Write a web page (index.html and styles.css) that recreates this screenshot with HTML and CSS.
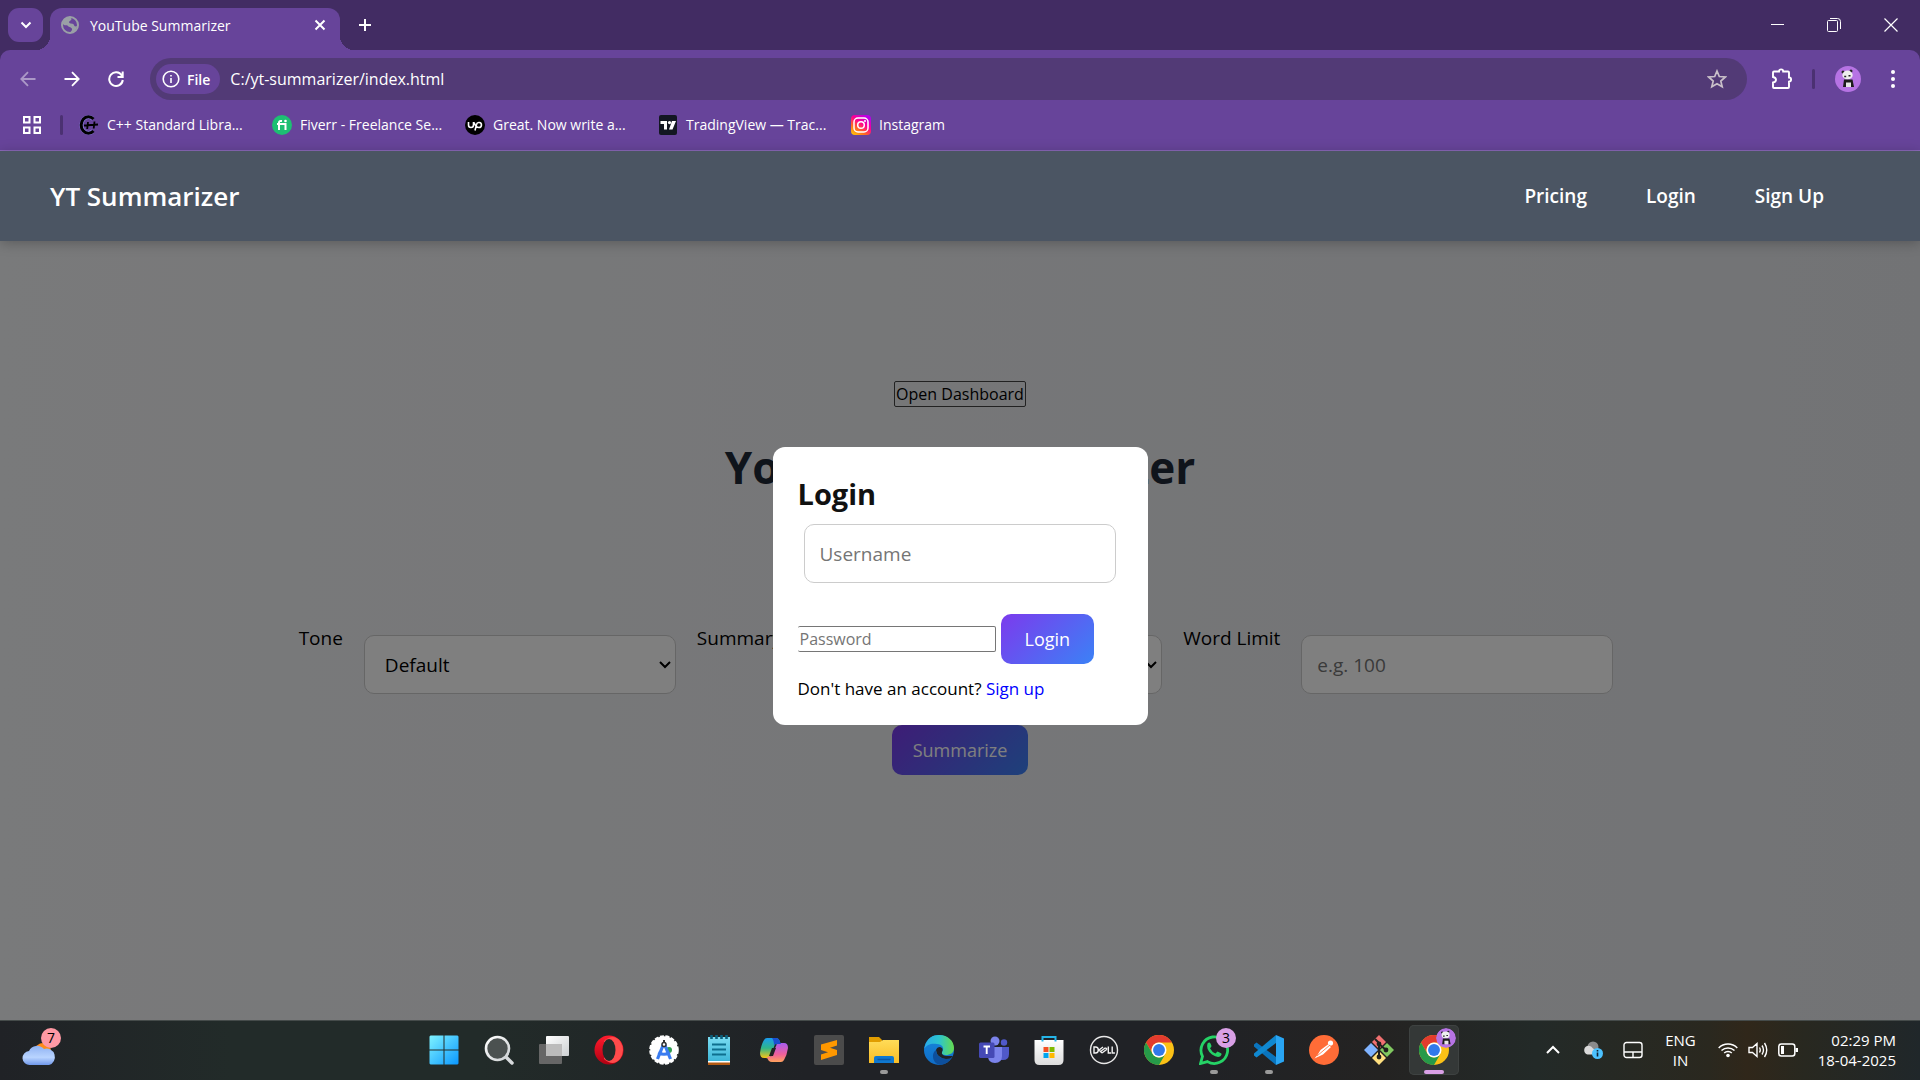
FILE: index.html
```html
<!DOCTYPE html>
<html lang="en">
<head>
<meta charset="utf-8">
<meta name="viewport" content="width=device-width, initial-scale=1">
<title>YouTube Summarizer</title>
<link rel="stylesheet" href="styles.css">
</head>
<body>
<svg class="defs" aria-hidden="true">
  <defs>
    <linearGradient id="gWin" x1="0" y1="0" x2="1" y2="1"><stop offset="0" stop-color="#7ff3ff"/><stop offset="1" stop-color="#0a97ff"/></linearGradient>
    <linearGradient id="gGlass" x1="0" y1="0" x2="1" y2="1"><stop offset="0" stop-color="#fff"/><stop offset="1" stop-color="#ccd0d2"/></linearGradient>
    <linearGradient id="gOpera" x1="0" y1="0" x2="0" y2="1"><stop offset="0" stop-color="#ff1b2d"/><stop offset="1" stop-color="#b00012"/></linearGradient>
    <linearGradient id="gNote" x1="0" y1="0" x2="0" y2="1"><stop offset="0" stop-color="#7adcf2"/><stop offset="1" stop-color="#3db6d8"/></linearGradient>
    <linearGradient id="gCopA" x1="0" y1="0" x2="0" y2="1"><stop offset="0" stop-color="#1a9cf0"/><stop offset=".5" stop-color="#2fb68a"/><stop offset="1" stop-color="#fbc513"/></linearGradient>
    <linearGradient id="gCopB" x1="0" y1="0" x2="0" y2="1"><stop offset="0" stop-color="#a85cf0"/><stop offset=".6" stop-color="#f0609a"/><stop offset="1" stop-color="#ffa35c"/></linearGradient>
    <linearGradient id="gFold" x1="0" y1="0" x2="0" y2="1"><stop offset="0" stop-color="#ffdc58"/><stop offset="1" stop-color="#f9bd26"/></linearGradient>
    <linearGradient id="gEdge" x1="0" y1="0" x2="1" y2="0"><stop offset="0" stop-color="#2aa9e8"/><stop offset=".5" stop-color="#2cc4cf"/><stop offset="1" stop-color="#66dc4c"/></linearGradient>
    <linearGradient id="gEdgeB" x1="0" y1="0" x2="0" y2="1"><stop offset="0" stop-color="#1787dd"/><stop offset="1" stop-color="#0f6cc6"/></linearGradient>
    <linearGradient id="gStore" x1="0" y1="0" x2="0" y2="1"><stop offset="0" stop-color="#fff"/><stop offset="1" stop-color="#dcdcdc"/></linearGradient>
    <linearGradient id="gCloud" x1="0" y1="0" x2="0" y2="1"><stop offset="0" stop-color="#8fb2f2"/><stop offset=".6" stop-color="#b9d4ff"/><stop offset="1" stop-color="#6f97ea"/></linearGradient>
    <linearGradient id="gInsta" x1="0" y1="1" x2=".7" y2="0"><stop offset="0" stop-color="#ffd600"/><stop offset=".35" stop-color="#ff6a1f"/><stop offset=".65" stop-color="#ff0090"/><stop offset="1" stop-color="#b800e8"/></linearGradient>
    <symbol id="chrome" viewBox="0 0 48 48">
      <circle cx="24" cy="24" r="24" fill="#fbc116"/>
      <path d="M3.2 12A24 24 0 0 1 44.8 12H24A12 12 0 0 0 13.6 30Z" fill="#e33b2e"/>
      <path d="M3.2 12A24 24 0 0 0 24 48L34.4 30A12 12 0 0 1 13.6 30Z" fill="#269a49"/>
      <circle cx="24" cy="24" r="12" fill="#fff"/><circle cx="24" cy="24" r="9.5" fill="#3279ea"/>
    </symbol>
    <symbol id="panda" viewBox="0 0 26 26">
      <circle cx="13" cy="13" r="13" fill="#b673e4"/>
      <circle cx="8" cy="6" r="1.500" fill="#222"/><circle cx="16" cy="5" r="1.500" fill="#222"/>
      <ellipse cx="12.500" cy="9" rx="5.200" ry="4.400" fill="#eee"/>
      <path d="M9.200 10.500h2M13.500 9.800h2" stroke="#222" stroke-width="1.500"/>
      <path d="M9 13.500h8.500l1.500 7.500h-3v-4h-4.500v4H8z" fill="#1c1c1c"/><path d="M11 16.500h5V21h-5z" fill="#e6e6e6"/>
    </symbol>
  </defs>
</svg>

<header class="browser">
  <div class="tabstrip">
    <button class="tab-search" aria-label="Search tabs"><svg width="12" height="12" viewBox="0 0 12 12"><path d="M1.500 3.500 6 8l4.500-4.500" fill="none" stroke="#fff" stroke-width="2"/></svg></button>
    <div class="tab">
      <svg width="18" height="18" viewBox="0 0 18 18"><circle cx="9" cy="9" r="8" fill="#67449a" stroke="#9aa0a6" stroke-width="2"/><path d="M8 1.500c3 .5 3 2 1.500 3S7.500 6 8.500 7s4 0 4.500 2 2.500 1.500 3.500 1L14 15l-4 2c-1-2 1.500-2 1-4s-3-1.500-4-3-2 0-4-1L1 7l3-5z" fill="#9aa0a6"/></svg>
      <span class="tab-title">YouTube Summarizer</span>
      <button class="icon-btn" aria-label="Close tab"><svg width="12" height="12" viewBox="0 0 12 12"><path d="m1.500 1.500 9 9m0-9-9 9" stroke="#fff" stroke-width="2"/></svg></button>
    </div>
    <button class="icon-btn new-tab" aria-label="New tab"><svg width="14" height="14" viewBox="0 0 14 14"><path d="M7 1v12M1 7h12" stroke="#fff" stroke-width="2"/></svg></button>
    <div class="window-controls">
      <button class="icon-btn" aria-label="Minimize"><svg width="14" height="14" viewBox="0 0 14 14"><path d="M1 6.500h13" stroke="#fff"/></svg></button>
      <button class="icon-btn" aria-label="Restore"><svg width="14" height="14" viewBox="0 0 14 14"><path d="M.5 3.500q0-1 1-1h8q1 0 1 1v9q0 1-1 1h-8q-1 0-1-1zM3 .5h7.500q3 0 3 3V11" fill="none" stroke="#fff"/></svg></button>
      <button class="icon-btn" aria-label="Close"><svg width="14" height="14" viewBox="0 0 14 14"><path d="m.5.500 13 13m0-13-13 13" stroke="#fff" stroke-width="1.200"/></svg></button>
    </div>
  </div>
  <div class="toolbar">
    <div class="nav-buttons">
      <button class="icon-btn faded" aria-label="Back"><svg width="16" height="16" viewBox="0 0 16 16"><path d="M15.500 8h-14M8 1.200 1.300 8 8 14.800" fill="none" stroke="#fff" stroke-width="1.800"/></svg></button>
      <button class="icon-btn" aria-label="Forward"><svg width="16" height="16" viewBox="0 0 16 16"><path d="M.5 8h14M8 1.200 14.700 8 8 14.800" fill="none" stroke="#fff" stroke-width="1.800"/></svg></button>
      <button class="icon-btn" aria-label="Reload"><svg width="16" height="16" viewBox="0 0 16 16"><path d="M13.800 4.500A6.800 6.800 0 1 0 14.800 9M14.700.500V6H9.500" fill="none" stroke="#fff" stroke-width="2"/></svg></button>
    </div>
    <div class="omnibox">
      <button class="file-chip"><svg width="18" height="18" viewBox="0 0 18 18"><circle cx="9" cy="9" r="7.800" fill="none" stroke="#fff" stroke-width="1.600"/><path d="M9 8v5M9 5v1.600" stroke="#fff" stroke-width="1.600"/></svg>File</button>
      <input class="url" type="text" aria-label="Address" value="C:/yt-summarizer/index.html">
      <button class="icon-btn" aria-label="Bookmark this page"><svg width="20" height="20" viewBox="0 0 20 20"><path d="m10 2 2.300 5.500 6 .5-4.500 4 1.400 5.800L10 14.700l-5.200 3.100L6.200 12 1.700 8l6-.5z" fill="none" stroke="#c9c0c9" stroke-width="1.700"/></svg></button>
    </div>
    <button class="icon-btn ext" aria-label="Extensions"><svg width="22" height="22" viewBox="0 0 22 22"><path d="M2 4.500q0-1 1-1h5a2 2 0 0 1 4.200 0H17q1 0 1 1v5a2 2 0 0 1 0 4.200V19q0 1-1 1H3q-1 0-1-1v-4.500q3-.5 3-2.700T2 9z" fill="none" stroke="#fff" stroke-width="1.900"/></svg></button>
    <span class="divider"></span>
    <button class="icon-btn profile" aria-label="Profile"><svg width="26" height="26"><use href="#panda"/></svg></button>
    <button class="icon-btn menu" aria-label="Menu"><svg width="6" height="20" viewBox="0 0 6 20"><g fill="#fff"><circle cx="3" cy="3" r="2"/><circle cx="3" cy="10" r="2"/><circle cx="3" cy="17" r="2"/></g></svg></button>
  </div>
  <nav class="bookmarks" aria-label="Bookmarks">
    <button class="icon-btn" aria-label="Apps"><svg width="18" height="18" viewBox="0 0 18 18"><path d="M1 1h5.500v5.500H1zM11.500 1H17v5.500h-5.500zM1 11.500h5.500V17H1zM11.500 11.500H17V17h-5.500z" fill="none" stroke="#fff" stroke-width="2"/></svg></button>
    <span class="divider"></span>
    <a class="bookmark" href="#"><svg width="20" height="20" viewBox="0 0 20 20"><path d="M14 4A7 8 0 1 0 14 16" fill="none" stroke="#8a7ee0" stroke-width="4"/><path d="M14.500 4A7.300 8.300 0 1 0 14.500 16" fill="none" stroke="#000" stroke-width="3"/><path d="M5 10.500 19 9.500M9 7l-.8 7M15.500 6.500l-.8 7" stroke="#000" stroke-width="1.800"/></svg><span>C++ Standard Libra...</span></a>
    <a class="bookmark" href="#"><svg width="20" height="20" viewBox="0 0 20 20"><circle cx="10" cy="10" r="10" fill="#1dbf73"/><path d="M7 15V7.500Q7 5.500 10 6M5 9h8.500v6" fill="none" stroke="#fff" stroke-width="2"/><circle cx="13.500" cy="6" r="1.300" fill="#fff"/></svg><span>Fiverr - Freelance Se...</span></a>
    <a class="bookmark" href="#"><svg width="20" height="20" viewBox="0 0 20 20"><circle cx="10" cy="10" r="10" fill="#000"/><path d="M3.500 7v3a2.500 2.500 0 0 0 5 0V7M10 15.500l1.500-6a2.500 2.500 0 1 1 2.500 3q-3 0-5-5" fill="none" stroke="#fff" stroke-width="1.600"/></svg><span>Great. Now write a...</span></a>
    <a class="bookmark" href="#"><svg width="20" height="20" viewBox="0 0 20 20"><rect x="1" width="18" height="20" rx="2" fill="#131722"/><path d="M2.500 6H9v8.500H6V9H2.500zM14 6h4l-3.500 8.500h-3.500z" fill="#fff"/><circle cx="11.500" cy="7.600" r="1.600" fill="#fff"/></svg><span>TradingView — Trac...</span></a>
    <a class="bookmark" href="#"><svg width="20" height="20" viewBox="0 0 20 20"><rect width="20" height="20" rx="4" fill="url(#gInsta)"/><rect x="3" y="3" width="14" height="14" rx="4" fill="none" stroke="#fff" stroke-width="1.500"/><circle cx="10" cy="10" r="3.300" fill="none" stroke="#fff" stroke-width="1.500"/><circle cx="14" cy="6" r="1" fill="#fff"/></svg><span>Instagram</span></a>
  </nav>
</header>

<div class="page">
  <header class="site-header">
    <span class="brand">YT Summarizer</span>
    <nav class="site-nav" aria-label="Site">
      <a href="#">Pricing</a>
      <a href="#">Login</a>
      <a href="#">Sign Up</a>
    </nav>
  </header>
  <main class="content">
    <button class="plain-btn">Open Dashboard</button>
    <h1>YouTube Summarizer</h1>
    <div class="options">
      <label for="tone">Tone</label>
      <select class="field" id="tone"><option>Default</option></select>
      <label for="type">Summary Type</label>
      <select class="field" id="type"><option>Default</option></select>
      <label for="limit">Word Limit</label>
      <input class="field" id="limit" type="text" placeholder="e.g. 100">
    </div>
    <button class="primary">Summarize</button>
  </main>
  <div class="overlay">
    <form class="modal" role="dialog" aria-labelledby="login-title">
      <h2 id="login-title">Login</h2>
      <input class="field" type="text" placeholder="Username" aria-label="Username">
      <div class="login-row">
        <input class="password" type="password" placeholder="Password" aria-label="Password">
        <button class="primary" type="button">Login</button>
      </div>
      <p>Don't have an account? <a href="#">Sign up</a></p>
    </form>
  </div>
</div>

<footer class="taskbar">
  <button class="weather" aria-label="Widgets">
    <svg width="36" height="36" viewBox="0 0 36 36"><circle cx="22" cy="19" r="8" fill="#ff8a1a"/><path d="M8 33a7 7 0 0 1-1-14 9 9 0 0 1 15-2 8 8 0 0 1 5 16z" fill="url(#gCloud)" transform="translate(1 0)"/></svg>
    <span class="badge badge-pink">7</span>
  </button>
  <div class="apps">
    <button class="app" aria-label="Start"><svg width="30" height="30" viewBox="0 0 30 30"><path d="M1.500.500h13v14H.5v-13zM15.500.500h13l1 1v13h-14zM.5 15.500h14v14h-13l-1-1zM15.500 15.500h14v13l-1 1h-13z" fill="url(#gWin)"/></svg></button>
    <button class="app" aria-label="Search"><svg width="30" height="30" viewBox="0 0 30 30"><path d="m21 21 7 7" stroke="#d7dadc" stroke-width="3.500" stroke-linecap="round"/><circle cx="13.500" cy="13.500" r="11.500" fill="#4b5150" stroke="url(#gGlass)" stroke-width="2.600"/></svg></button>
    <button class="app" aria-label="Task view"><svg width="30" height="30" viewBox="0 0 30 30"><rect y="9" width="23" height="20" rx="1" fill="#666"/><rect x="7" y="1" width="23" height="20" rx="1" fill="url(#gGlass)"/><path d="M7 9h16v12H7z" fill="#bbb"/></svg></button>
    <button class="app" aria-label="Opera"><svg width="30" height="30" viewBox="0 0 30 30"><circle cx="15" cy="15" r="14.500" fill="url(#gOpera)"/><path d="M10 6Q19-2 26 6q6 9 0 18-7 8-16 0z" fill="#ff4b4b"/><ellipse cx="15" cy="15" rx="6.500" ry="11" fill="#222b2a"/></svg></button>
    <button class="app" aria-label="Android Studio"><svg width="30" height="30" viewBox="0 0 30 30"><circle cx="15" cy="15" r="13.800" fill="#fff" stroke="#fff" stroke-width="2" stroke-dasharray="4 1.500"/><circle cx="20" cy="15" r="3" fill="#2f9e50"/><path d="M15 8 8.500 24M15 8l6.500 16M9 18q6 2.500 12 0" fill="none" stroke="#3a7cf0" stroke-width="3.200"/><circle cx="15" cy="9.500" r="2" fill="#fff" stroke="#333" stroke-width="1.500"/><path d="M15 5v3" stroke="#333" stroke-width="2"/></svg></button>
    <button class="app" aria-label="Notepad"><svg width="30" height="30" viewBox="0 0 30 30"><path d="M4 26h22v4H4z" fill="#b35a12"/><path d="M4 25h22v2.500H4z" fill="#fff"/><path d="M4 2h22v24H4z" fill="url(#gNote)"/><path d="M8 9.500h14M8 14.500h14M8 19.500h14" stroke="#0e6f8e" stroke-width="2"/><path d="M7.500 0v4M12.500 0v4M17.500 0v4M22.500 0v4" stroke="#0b5f7c" stroke-width="2.600"/></svg></button>
    <button class="app" aria-label="Copilot"><svg width="30" height="30" viewBox="0 0 30 30"><path d="M8 3h9q3 0 4 4l1 4-6-2-4 11q-1 4-5 3H5q-4 0-4-5 1-8 4-13 1-2 3-2z" fill="url(#gCopA)"/><path d="M22 27h-9q-4 0-5-5l5-1 4-10q1-3 5-3h3q4 0 4 5-1 7-4 12-1 2-3 2z" fill="url(#gCopB)"/><path d="M17 3q3 0 4 4l1 2h-5q-2 0-2 2 0-6-2-8z" fill="#1a4fd0"/><path d="M13 13h4l-3 8h-4z" fill="#212225"/></svg></button>
    <button class="app" aria-label="Sublime Text"><svg width="30" height="30" viewBox="0 0 30 30"><rect width="30" height="30" rx="2" fill="#4b4b4b"/><path d="m7 9.500 16-4.500v5.500l-7 2.200 7 2.300v5L7 25v-5.500l7-2.200-7-2.300z" fill="#ff9800"/></svg></button>
    <button class="app" aria-label="File Explorer"><svg width="30" height="30" viewBox="0 0 30 30"><path d="M0 2h10l3 3v5H0z" fill="#e19d00"/><path d="M0 7h11l3-2h16v23H0z" fill="url(#gFold)"/><path d="M5 28v-5q0-2 2-2h16q2 0 2 2v5z" fill="#0f78d0"/><path d="M8.500 24.500h13" stroke="#0b57a4" stroke-width="1.500"/></svg><i class="running"></i></button>
    <button class="app" aria-label="Edge"><svg width="30" height="30" viewBox="0 0 30 30"><circle cx="15" cy="15" r="15" fill="url(#gEdgeB)"/><path d="M12 15c0 7 8 11 16 7a15 15 0 0 1-11 8C8 29 7 18 12 15z" fill="#0d4f9c"/><path d="M1 11C3 3 9 0 15 0c9 0 15 6 15 13 0 5-4 7-8 7-3 0-5-1-4-3 3-4 0-8-5-8-5-1-10 0-13 5z" fill="url(#gEdge)"/><path d="M12 15q1-3 4-3 4 1 2 5-1 3 4 4h7q-2 3-7 3-9-1-10-9z" fill="#212225"/></svg></button>
    <button class="app" aria-label="Teams"><svg width="30" height="30" viewBox="0 0 30 30"><circle cx="16" cy="6" r="4.500" fill="#7b83eb"/><circle cx="25" cy="7.500" r="3.200" fill="#5059c9"/><path d="M18 12h12v7q0 6-6 6h-4z" fill="#5059c9"/><path d="M9 12h14v9q0 7-7 7t-7-7z" fill="#7b83eb"/><rect y="7.500" width="15.500" height="15.500" rx="1.500" fill="#4549b5"/><path d="M4.500 11.500h6.500M7.700 11.500V19" stroke="#fff" stroke-width="1.900"/></svg></button>
    <button class="app" aria-label="Microsoft Store"><svg width="30" height="30" viewBox="0 0 30 30"><path d="M.5 5h29v20q0 5-5 5h-19q-5 0-5-5z" fill="url(#gStore)"/><path d="M8.500 6.500V2h13v4.500" fill="none" stroke="#25b5e8" stroke-width="2"/><path d="M9.500 12h5v5h-5z" fill="#f25022"/><path d="M15.500 12h5v5h-5z" fill="#7fba00"/><path d="M9.500 18h5v5h-5z" fill="#00a4ef"/><path d="M15.500 18h5v5h-5z" fill="#ffb900"/></svg></button>
    <button class="app" aria-label="Dell"><svg width="30" height="30" viewBox="0 0 30 30"><circle cx="15" cy="15" r="13.500" fill="none" stroke="#e8e8e8" stroke-width="1.400"/><path d="M5 12h1.500q2.800 0 2.800 3t-2.800 3H5zM19.300 11.500V18h2.700M23.200 11.500V18h2.700M10 15l4-3M11.500 16.500l5-3.700M13 18l5-3.700M10 15l3 3M16.500 12.800l1.500 1.500" fill="none" stroke="#f2f2f2" stroke-width="1.400"/></svg></button>
    <button class="app" aria-label="Chrome"><svg width="30" height="30"><use href="#chrome"/></svg></button>
    <button class="app" aria-label="WhatsApp"><svg width="30" height="30" viewBox="0 0 30 30"><path d="m1.500 28.500 2-7.200A13.300 13.300 0 1 1 8.500 26.600z" fill="none" stroke="#25d366" stroke-width="2.800"/><path d="M8.500 8.500q2-2 3 0l1 2.500q0 1-1.500 2.200 2 4 5.500 5.300l2-2 3.500 1.700q1.500 1-1 3.300-3 1.500-8-2-6.500-5-4.500-11z" fill="#25d366"/></svg><span class="badge badge-lilac">3</span><i class="running"></i></button>
    <button class="app" aria-label="VS Code"><svg width="30" height="30" viewBox="0 0 30 30"><path d="m22 0 8 3.500v23L22 30z" fill="#29a5f3"/><path d="m0 9.500 2.500-2L22 22v8L0 11.500z" fill="#0a74bd"/><path d="m0 20.500 2.500 2L22 8V0L0 18.500z" fill="#1088d0"/></svg><i class="running"></i></button>
    <button class="app" aria-label="Postman"><svg width="30" height="30" viewBox="0 0 30 30"><circle cx="15" cy="15" r="15" fill="#ff6c37"/><circle cx="21.500" cy="8" r="2.600" fill="#fff"/><path d="m19 9.500 3 2.500-8 7.500-8.500 4 3-3.500 3-5z" fill="#fff"/><path d="m8 21 13-11" stroke="#ff6c37" stroke-width=".8"/></svg></button>
    <button class="app" aria-label="Git"><svg width="30" height="30" viewBox="0 0 30 30"><path d="m15 0 7 7-7 7-7-7z" fill="#f07070"/><path d="m7 8 7 7-7 7-7-7z" fill="#80b3ff"/><path d="m23 8 7 7-7 7-7-7z" fill="#80c860"/><path d="m15 16 7 7-7 7-7-7z" fill="#ffe080"/><path d="m11 4 4 4v14M15 9l7 6" fill="none" stroke="#20201f" stroke-width="2"/><circle cx="15" cy="9" r="2.400" fill="#20201f"/><circle cx="22" cy="15" r="2.400" fill="#20201f"/><circle cx="15" cy="22" r="2.400" fill="#20201f"/></svg></button>
    <button class="app active" aria-label="Chrome profile"><svg width="30" height="30"><use href="#chrome"/></svg><svg class="badge" width="20" height="20"><use href="#panda"/></svg><i class="running"></i></button>
  </div>
  <div class="tray">
    <button class="icon-btn chevron" aria-label="Show hidden icons"><svg width="14" height="10" viewBox="0 0 14 10"><path d="m1 8 6-6 6 6" fill="none" stroke="#fff" stroke-width="2"/></svg></button>
    <button class="icon-btn" aria-label="OneDrive"><svg width="20" height="20" viewBox="0 0 20 20"><circle cx="10" cy="7" r="5.500" fill="#8b8b8b"/><path d="M4.500 14.500a4.500 4.500 0 0 1-.5-8.500q4-1 6 2.500l6 3.500v2.500z" fill="#dadada"/><circle cx="14.500" cy="13.500" r="5.500" fill="#4cc2ff"/><path d="M14.500 12.500v4M14.500 10v1.500" stroke="#123" stroke-width="1.600"/></svg></button>
    <button class="icon-btn" aria-label="Touchpad"><svg width="20" height="18" viewBox="0 0 20 18"><rect x="1" y="1.500" width="18" height="15" rx="2.500" fill="none" stroke="#fff" stroke-width="1.400"/><path d="M1 11h18M10 11v5.500" stroke="#fff" stroke-width="1.400"/></svg></button>
    <span class="lang">ENG<br>IN</span>
    <button class="status" aria-label="Network, volume and battery">
      <svg width="20" height="20" viewBox="0 0 20 20"><g fill="none" stroke="#fff" stroke-width="1.500"><path d="M.7 8a13 13 0 0 1 18.600 0M3.500 10.500a9.500 9.500 0 0 1 13 0M6.200 13a5.500 5.500 0 0 1 7.600 0"/></g><circle cx="10" cy="15.500" r="1.800" fill="#fff"/></svg>
      <svg width="20" height="20" viewBox="0 0 20 20"><path d="M1 7.500h3.500L9 3.500v13l-4.500-4H1zM11.500 7.500q1.500 2.500 0 5M14 5.500q3 4.500 0 9M16.500 3q4.500 7 0 14" fill="none" stroke="#fff" stroke-width="1.400"/></svg>
      <svg width="20" height="20" viewBox="0 0 20 20"><rect x=".8" y="4" width="16" height="12" rx="2.500" fill="none" stroke="#fff" stroke-width="1.500"/><path d="M3 6h3v8H3zM17.500 8H20v4h-2.500z" fill="#fff"/></svg>
    </button>
    <time class="clock" datetime="2025-04-18T14:29">02:29 PM<br>18-04-2025</time>
  </div>
</footer>
</body>
</html>
```
FILE: styles.css
```css
* { box-sizing: border-box; }

body {
  margin: 0;
  min-height: 100vh;
  display: flex;
  flex-direction: column;
  font-family: "Open Sans", "Noto Sans", sans-serif;
  font-size: 16px;
  color: #000;
}

button, input, select { font: inherit; margin: 0; }
button { cursor: pointer; }
svg { display: block; flex: none; }
.defs { position: absolute; width: 0; height: 0; }

.icon-btn {
  display: flex;
  align-items: center;
  justify-content: center;
  padding: 0;
  border: 0;
  background: none;
}

/* Browser frame */
.browser {
  background: #422c63;
  color: #fff;
  font-size: 14px;
}

.tabstrip {
  display: flex;
  align-items: center;
  height: 50px;
  padding-left: 8px;
}

.tab-search {
  display: flex;
  align-items: center;
  justify-content: center;
  width: 35px;
  height: 34px;
  padding: 0;
  border: 0;
  border-radius: 11px;
  background: #67449a;
}

.tab {
  position: relative;
  display: flex;
  align-items: center;
  gap: 11px;
  width: 290px;
  height: 42px;
  margin-left: 7px;
  padding: 0 14px 8px 11px;
  align-self: flex-end;
  border-radius: 12px 12px 0 0;
  background: #67449a;
}

.tab::before,
.tab::after {
  content: "";
  position: absolute;
  bottom: 0;
  width: 14px;
  height: 14px;
}
.tab::before { left: -14px; background: radial-gradient(circle at 0 0, transparent 14px, #67449a 14px); }
.tab::after { right: -14px; background: radial-gradient(circle at 100% 0, transparent 14px, #67449a 14px); }
.tab-title { flex: 1; }
.new-tab { margin-left: 18px; }

.window-controls {
  display: flex;
  gap: 43px;
  margin-left: auto;
  padding-right: 22px;
}

.toolbar {
  display: flex;
  align-items: center;
  height: 58px;
  padding: 0 24px 0 20px;
  border-radius: 10px 10px 0 0;
  background: #67449a;
}

.nav-buttons { display: flex; gap: 28px; }
.faded { opacity: .45; }

.omnibox {
  flex: 1;
  display: flex;
  align-items: center;
  height: 42px;
  margin-left: 26px;
  padding: 0 20px 0 6px;
  border-radius: 21px;
  background: #523a76;
}

.file-chip {
  display: flex;
  align-items: center;
  gap: 7px;
  height: 30px;
  padding: 0 10px 0 6px;
  border: 0;
  border-radius: 15px;
  background: #67449a;
  color: #fff;
  font-weight: 600;
}

.url {
  flex: 1;
  padding: 0;
  margin-left: 10px;
  border: 0;
  outline: 0;
  background: none;
  color: #fff;
  font-size: 16px;
}

.ext { margin-left: 24px; }
.divider { width: 3px; height: 20px; border-radius: 2px; background: #4b3172; }
.toolbar .divider { margin-left: 19px; }
.profile { margin-left: 20px; }
.menu { margin-left: 29px; }

.bookmarks {
  display: flex;
  align-items: center;
  height: 43px;
  padding: 0 23px 8px;
  border-bottom: 1px solid #8c69ba;
  background: #67449a;
}
.bookmarks .divider { margin: 0 16px 0 19px; }

.bookmark {
  display: flex;
  align-items: center;
  gap: 8px;
  width: 193px;
  color: #fff;
  line-height: 18px;
  text-decoration: none;
  white-space: nowrap;
}

/* Web page */
.page {
  position: relative;
  flex: 1;
  background: linear-gradient(to right, #f3f4f6, #e5e7eb);
}

.site-header {
  position: relative;
  z-index: 2;
  display: flex;
  align-items: center;
  justify-content: space-between;
  height: 90px;
  padding: 0 96px 0 50px;
  background: #4b5563;
  box-shadow: 0 2px 12px rgba(0, 0, 0, .25);
  color: #fff;
}

.brand { font-size: 26px; font-weight: 600; }
.site-nav { display: flex; gap: 59px; }
.site-nav a {
  color: #fff;
  font-size: 19px;
  font-weight: 600;
  text-decoration: none;
}

.content {
  display: flex;
  flex-direction: column;
  align-items: center;
  padding: 140px 20px 0;
}

.plain-btn {
  height: 26px;
  padding: 0 1px;
  border: 1px solid #444;
  border-radius: 2px;
  background: none;
  color: #000;
  font-size: 16px;
  line-height: 24px;
}

h1 {
  margin: 30px 0 128px;
  color: #1f2937;
  font-size: 44px;
  line-height: 60px;
}

.options {
  display: flex;
  align-items: flex-start;
  gap: 21px;
  padding-right: 8px;
  font-size: 19px;
  line-height: 26px;
}
.options .field { margin-top: 10px; }

.field {
  width: 312px;
  height: 59px;
  padding: 0 15px;
  border: 1px solid #ccc;
  border-radius: 10px;
  background: #fff;
  color: #000;
  font-size: 19px;
}

select.field {
  appearance: none;
  padding: 0 20px;
  background: #fff url("data:image/svg+xml,%3Csvg xmlns='http://www.w3.org/2000/svg' width='12' height='8'%3E%3Cpath d='M1 1l5 5 5-5' fill='none' stroke='%23000' stroke-width='2'/%3E%3C/svg%3E") no-repeat right 4px center;
}

::placeholder { color: #757575; opacity: 1; }

.primary {
  height: 50px;
  border: 0;
  border-radius: 10px;
  background: linear-gradient(135deg, #7c3aed, #3b82f6);
  color: #fff;
  font-size: 18px;
}
.content .primary { margin-top: 31px; padding: 0 21px; }
.modal .primary { padding: 0 24px; }

.overlay {
  position: absolute;
  inset: 0;
  z-index: 1;
  display: flex;
  align-items: center;
  justify-content: center;
  padding-top: 1px;
  background: rgba(0, 0, 0, .5);
}

.modal {
  width: 375px;
  padding: 25px;
  border-radius: 12px;
  background: #fff;
}

.modal h2 {
  margin: 0 0 8px;
  color: #111;
  font-size: 29px;
  line-height: 44px;
}
.modal .field { display: block; margin: 0 6px 31px; }

.login-row { display: flex; align-items: center; gap: 5px; }

.password {
  width: 198px;
  height: 26px;
  padding: 0 2px;
  border: 1px solid #767676;
  border-left: 0;
  border-radius: 2px;
  font-size: 16px;
}

.modal p {
  margin: 14px 0 0;
  font-size: 17px;
  line-height: 22px;
}
.modal a { color: #00f; text-decoration: none; }

/* Taskbar */
.taskbar {
  display: grid;
  grid-template-columns: 418fr auto 460fr;
  align-items: center;
  height: 60px;
  padding-bottom: 2px;
  border-top: 1px solid #454b4a;
  background: linear-gradient(to right, #202226, #222b29 12%, #222b29 25%, #202226 42%, #202226 62%, #242322 72%, #232a28 80%, #2a281f 89%, #30271a 91%, #282820 94%, #20272a);
  color: #fff;
  font-size: 15px;
  line-height: 20px;
}

.weather, .app {
  position: relative;
  display: flex;
  align-items: center;
  justify-content: center;
  width: 50px;
  height: 50px;
  padding: 0;
  border: 0;
  border-radius: 5px;
  background: none;
}
.weather { margin-left: 14px; }

.apps { display: flex; gap: 5px; }

.badge {
  position: absolute;
  top: 3px;
  right: 3px;
  width: 20px;
  height: 20px;
  border-radius: 50%;
  color: #000;
  font-size: 14px;
  line-height: 20px;
}
.badge-pink { background: #ff99a4; }
.badge-lilac { background: #d9a0e6; }

.running {
  position: absolute;
  bottom: 1px;
  left: 50%;
  width: 8px;
  height: 4px;
  border-radius: 2px;
  background: #9a9a9a;
  transform: translateX(-50%);
}

.active { background: #343837; box-shadow: inset 0 0 0 1px #3e4241; }
.active .running { width: 20px; background: #d9a0e6; }

.tray {
  display: flex;
  align-items: center;
  justify-content: flex-end;
  gap: 20px;
  padding-right: 24px;
}
.chevron { margin-right: 3px; }
.lang { margin: 0 2px; text-align: center; }
.status {
  display: flex;
  gap: 10px;
  padding: 0;
  border: 0;
  background: none;
}
.clock { text-align: right; }
```
